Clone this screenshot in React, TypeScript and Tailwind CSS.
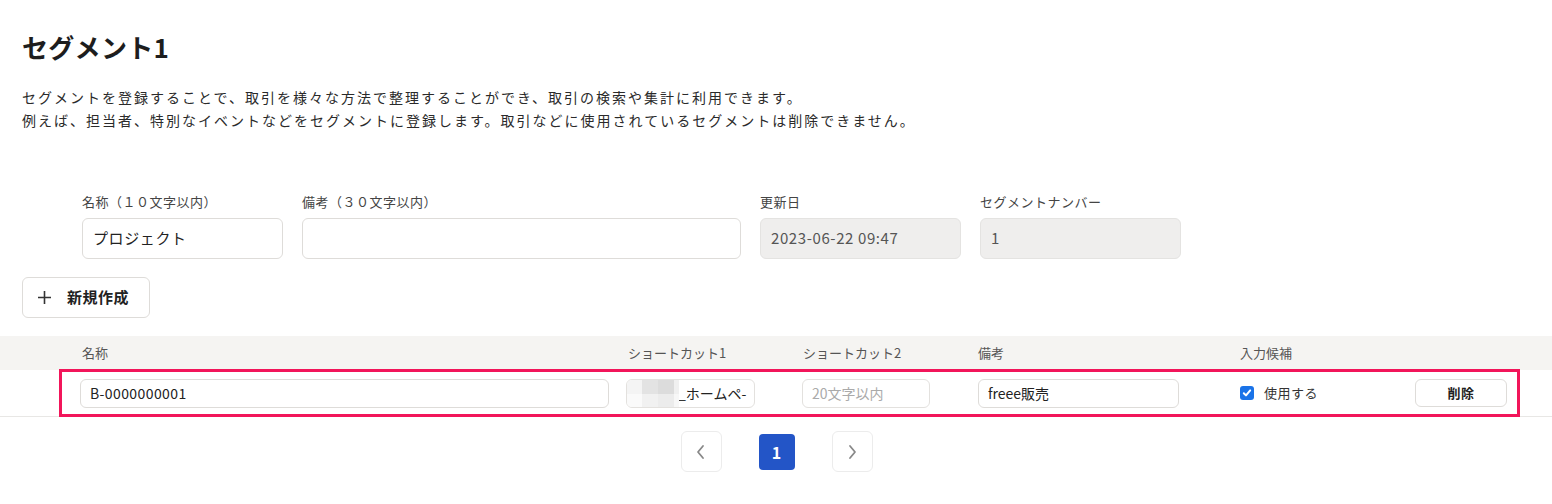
import React from "react";

const font = { fontFamily: '"Noto Sans CJK JP", "Noto Sans", sans-serif' };

function Field({ label, width, value, disabled }: { label: string; width: string; value?: string; disabled?: boolean }) {
  return (
    <div className={`flex flex-col ${width}`}>
      <div className="text-[13px] leading-[20px] tracking-[0.5px] text-[#444] mb-[6px]">{label}</div>
      <div
        className={`h-[41px] rounded-[6px] border flex items-center px-[10px] text-[15px] tracking-[0.6px] ${
          disabled ? "bg-[#efeeed] border-[#e4e3e1] text-[#555]" : "bg-white border-[#dedcd9] text-[#222]"
        }`}
      >
        {value}
      </div>
    </div>
  );
}

function Mosaic() {
  const cells = [
    ["#f4f4f4", "#e3e3e3", "#dcdcdc", "#f0f0f0"],
    ["#fafafa", "#f1f1f1", "#ececec", "#f7f7f7"],
  ];
  return (
    <div className="absolute left-[-1px] top-[-1px] flex flex-col">
      {cells.map((row, i) => (
        <div key={i} className="flex">
          {row.map((c, j) => (
            <div key={j} className={j === 3 ? "w-[5px] h-[15px]" : "w-[16px] h-[15px]"} style={{ background: c }} />
          ))}
        </div>
      ))}
    </div>
  );
}

export default function App() {
  return (
    <div className="w-[1552px] h-[504px] bg-white text-[#222] overflow-hidden" style={font}>
      <div className="px-[22px]">
        <h1 className="pt-[29px] text-[26px] leading-[36px] font-bold tracking-[0.3px] text-[#1d1d1d]">セグメント1</h1>
        <div className="mt-[21px] text-[14px] leading-[23px] tracking-[2px] text-[#2a2a2a]">
          <p>セグメントを登録することで、取引を様々な方法で整理することができ、取引の検索や集計に利用できます。</p>
          <p>例えば、担当者、特別なイベントなどをセグメントに登録します。取引などに使用されているセグメントは削除できません。</p>
        </div>
        <div className="mt-[60px] pl-[60px] flex gap-[19px]">
          <Field label="名称（１０文字以内）" width="w-[201px]" value="プロジェクト" />
          <Field label="備考（３０文字以内）" width="w-[439px]" />
          <Field label="更新日" width="w-[201px]" value="2023-06-22 09:47" disabled />
          <Field label="セグメントナンバー" width="w-[201px]" value="1" disabled />
        </div>
        <button className="mt-[18px] h-[41px] w-[128px] rounded-[6px] border border-[#dedcd9] bg-white flex items-center pl-[14px] gap-[15px] text-[15px] font-bold text-[#222] tracking-[0.5px]">
          <svg width="15" height="15" viewBox="0 0 15 15" fill="none" stroke="#333" strokeWidth="1.6">
            <path d="M7.5 1v13M1 7.5h13" />
          </svg>
          <span>新規作成</span>
        </button>
      </div>

      <div className="mt-[18px]">
        <div className="h-[34px] bg-[#f5f4f2] grid grid-cols-[80px_546px_176px_176px_262px_175px_1fr] items-center text-[13px] text-[#555]">
          <div />
          <div className="pl-[2px]">名称</div>
          <div className="pl-[2px]">ショートカット1</div>
          <div className="pl-[1px]">ショートカット2</div>
          <div>備考</div>
          <div>入力候補</div>
          <div />
        </div>
        <div className="relative h-[47px] border-b border-[#e8e7e5] grid grid-cols-[80px_546px_176px_176px_262px_175px_1fr] items-center text-[14px]">
          <div />
          <div className="pr-[17px]">
            <div className="h-[29px] rounded-[6px] border border-[#dedcd9] flex items-center px-[9px] tracking-[0.4px] text-[#222]">B-0000000001</div>
          </div>
          <div className="pr-[47px]">
            <div className="relative h-[29px] rounded-[6px] border border-[#e3e1de] flex items-center pl-[51px] text-[#222] overflow-hidden whitespace-nowrap">
              <Mosaic />
              <span>_ホームペ-</span>
            </div>
          </div>
          <div className="pr-[48px]">
            <div className="h-[29px] rounded-[6px] border border-[#e3e1de] flex items-center px-[9px] text-[#aaa]">20文字以内</div>
          </div>
          <div className="pr-[61px]">
            <div className="h-[29px] rounded-[6px] border border-[#dedcd9] flex items-center px-[9px] text-[#222]">freee販売</div>
          </div>
          <div className="flex items-center gap-[10px] text-[#333]">
            <span className="w-[14px] h-[14px] rounded-[3px] bg-[#1a73e8] flex items-center justify-center">
              <svg width="10" height="10" viewBox="0 0 10 10" fill="none" stroke="white" strokeWidth="2" strokeLinecap="round" strokeLinejoin="round">
                <path d="M1.8 5.2l2.2 2.2 4.2-5" />
              </svg>
            </span>
            <span className="text-[13px] tracking-[0.5px]">使用する</span>
          </div>
          <div>
            <button className="w-[92px] h-[28px] rounded-[6px] border border-[#dedcd9] bg-white text-[13px] font-bold text-[#222] tracking-[0.5px]">削除</button>
          </div>
          <div className="absolute left-[59px] top-[-1px] w-[1461px] h-[48px] border-[3px] border-[#f2155a] pointer-events-none" />
        </div>
      </div>

      <div className="mt-[14px] flex justify-center items-center gap-[37px] pl-[1px]">
        <div className="w-[41px] h-[41px] rounded-[6px] border border-[#ececec] flex items-center justify-center">
          <svg width="10" height="16" viewBox="0 0 10 16" fill="none" stroke="#888" strokeWidth="1.8" strokeLinecap="round" strokeLinejoin="round">
            <path d="M7 2L2 8l5 6" />
          </svg>
        </div>
        <div className="w-[36px] h-[36px] rounded-[4px] bg-[#2355c7] flex items-center justify-center text-white font-bold text-[16px]">1</div>
        <div className="w-[41px] h-[41px] rounded-[6px] border border-[#ececec] flex items-center justify-center">
          <svg width="10" height="16" viewBox="0 0 10 16" fill="none" stroke="#888" strokeWidth="1.8" strokeLinecap="round" strokeLinejoin="round">
            <path d="M3 2l5 6-5 6" />
          </svg>
        </div>
      </div>
    </div>
  );
}
